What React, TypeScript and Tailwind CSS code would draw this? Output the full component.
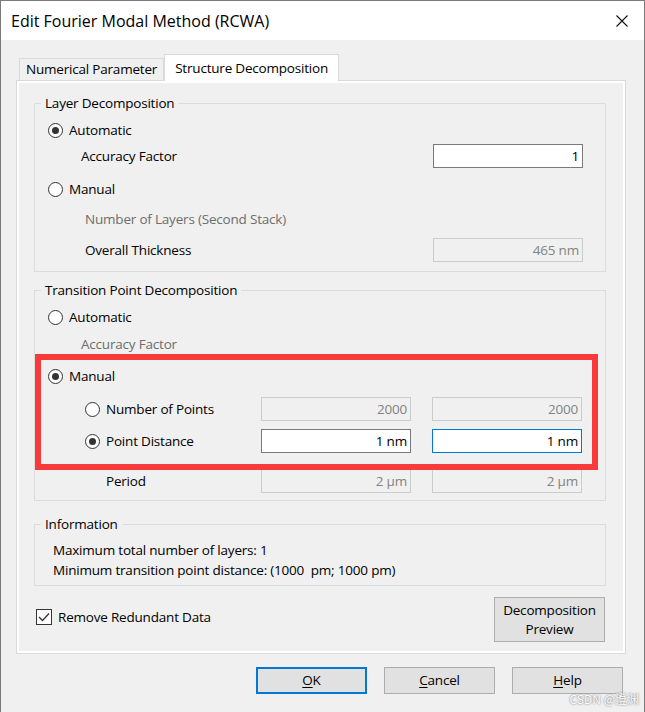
import React from 'react';

function Radio({ checked, label, disabled }: { checked?: boolean; label: string; disabled?: boolean }) {
  return (
    <div className="flex items-center gap-[6px]">
      <span className="w-[15px] h-[15px] rounded-full border border-[#333333] bg-white flex items-center justify-center shrink-0">
        {checked && <span className="w-[7px] h-[7px] rounded-full bg-[#333333]" />}
      </span>
      <span className={disabled ? 'text-[#6d6d6d]' : 'text-black'}>{label}</span>
    </div>
  );
}

function Field({ value, disabled, focused }: { value: string; disabled?: boolean; focused?: boolean }) {
  const look = disabled
    ? 'bg-[#f0f0f0] border-[#cccccc] text-[#838383]'
    : focused
      ? 'bg-white border-[#0078d7] text-black'
      : 'bg-white border-[#7a7a7a] text-black';
  return (
    <div className={`w-[150px] h-[24px] border ${look} flex items-center justify-end pr-[3px] shrink-0`}>
      {value}
    </div>
  );
}

function Group({ title, className, children }: { title: string; className?: string; children: React.ReactNode }) {
  return (
    <fieldset className={`border border-[#dcdcdc] ${className ?? ''}`}>
      <legend className="ml-[6px] px-[4px] leading-[20px] text-black">{title}</legend>
      {children}
    </fieldset>
  );
}

export default function App() {
  return (
    <div className="relative w-[645px] h-[712px] bg-[#f0f0f0] border-l border-r border-t border-[#7a7a7a] font-['Open_Sans',sans-serif] text-[13.5px] tracking-[-0.2px] text-black overflow-hidden">
      {/* Title bar */}
      <div className="h-[39px] bg-white flex items-center justify-between pl-[10px] pr-[16px]">
        <span className="text-[16px] tracking-normal text-black">Edit Fourier Modal Method (RCWA)</span>
        <svg width="12" height="12" viewBox="0 0 12 12" className="shrink-0">
          <path d="M0.5 0.5 L11.5 11.5 M11.5 0.5 L0.5 11.5" stroke="#111" strokeWidth="1.1" />
        </svg>
      </div>

      <div className="pl-[15px] pt-[14px]">
        {/* Tabs */}
        <div className="flex items-end h-[26px] pl-[3px]">
          <div className="h-[22px] px-[6px] flex items-center bg-[#f0f0f0] border border-b-0 border-[#dadada]">
            Numerical Parameter
          </div>
          <div className="relative z-10 h-[27px] -mb-px px-[10px] flex items-center bg-white border border-b-0 border-[#dadada]">
            Structure Decomposition
          </div>
        </div>

        {/* Tab page */}
        <div className="w-[610px] border border-[#dadada]">
          <div className="border-2 border-white pl-[15px] pr-[17px] pt-[10px] pb-[9px]">
            <Group title="Layer Decomposition" className="pb-[9px]">
              <div className="pl-[13px] mt-[5px] h-[24px] flex items-center">
                <Radio checked label="Automatic" />
              </div>
              <div className="mt-[2px] h-[24px] flex items-center justify-between pl-[46px] pr-[22px]">
                <span>Accuracy Factor</span>
                <Field value="1" />
              </div>
              <div className="pl-[13px] mt-[9px] h-[24px] flex items-center">
                <Radio label="Manual" />
              </div>
              <div className="mt-[6px] h-[24px] flex items-center pl-[50px] text-[#6d6d6d]">
                Number of Layers (Second Stack)
              </div>
              <div className="mt-[7px] h-[24px] flex items-center justify-between pl-[50px] pr-[22px]">
                <span>Overall Thickness</span>
                <Field value="465 nm" disabled />
              </div>
            </Group>

            <Group title="Transition Point Decomposition" className="mt-[8px] pb-[7px]">
              <div className="pl-[13px] mt-[5px] h-[24px] flex items-center">
                <Radio label="Automatic" />
              </div>
              <div className="mt-[3px] h-[24px] flex items-center pl-[46px] text-[#6d6d6d]">
                Accuracy Factor
              </div>
              <div className="pl-[13px] mt-[8px] h-[24px] flex items-center">
                <Radio checked label="Manual" />
              </div>
              <div className="mt-[9px] h-[24px] flex items-center pr-[22px]">
                <div className="w-[226px] pl-[50px]">
                  <Radio label="Number of Points" />
                </div>
                <Field value="2000" disabled />
                <div className="w-[21px]" />
                <Field value="2000" disabled />
              </div>
              <div className="mt-[8px] h-[24px] flex items-center pr-[22px]">
                <div className="w-[226px] pl-[50px]">
                  <Radio checked label="Point Distance" />
                </div>
                <Field value="1 nm" />
                <div className="w-[21px]" />
                <Field value="1 nm" focused />
              </div>
              <div className="mt-[16px] h-[24px] flex items-center pr-[22px]">
                <div className="w-[226px] pl-[71px]">Period</div>
                <Field value="2 µm" disabled />
                <div className="w-[21px]" />
                <Field value="2 µm" disabled />
              </div>
            </Group>

            <Group title="Information" className="mt-[13px] pb-[5px]">
              <div className="pt-[6px] pl-[18px]">
                <div className="leading-[20px]">Maximum total number of layers: 1</div>
                <div className="leading-[20px]">Minimum transition point distance: (1000&nbsp; pm; 1000 pm)</div>
              </div>
            </Group>

            <div className="mt-[11px] flex items-start justify-between pl-[2px] pr-[1px]">
              <div className="mt-[10px] flex items-center gap-[6px]">
                <span className="w-[16px] h-[16px] border border-[#333333] bg-white flex items-center justify-center">
                  <svg width="12" height="10" viewBox="0 0 12 10">
                    <path d="M1 5 L4.5 8.5 L11 1.5" fill="none" stroke="#333" strokeWidth="1.3" />
                  </svg>
                </span>
                <span>Remove Redundant Data</span>
              </div>
              <button className="w-[111px] h-[45px] bg-[#e1e1e1] border border-[#adadad] leading-[19px] text-center">
                Decomposition
                <br />
                Preview
              </button>
            </div>
          </div>
        </div>

        {/* Dialog buttons */}
        <div className="mt-[13px] flex justify-end gap-[17px] pr-[21px]">
          <button className="w-[111px] h-[27px] bg-[#e1e1e1] border-2 border-[#0078d7]">
            <span className="underline underline-offset-2">O</span>K
          </button>
          <button className="w-[111px] h-[27px] bg-[#e1e1e1] border border-[#adadad]">
            <span className="underline underline-offset-2">C</span>ancel
          </button>
          <button className="w-[111px] h-[27px] bg-[#e1e1e1] border border-[#adadad]">
            <span className="underline underline-offset-2">H</span>elp
          </button>
        </div>
      </div>

      {/* Annotation highlight */}
      <div className="absolute left-[34px] top-[353px] w-[563px] h-[116px] border-[6px] border-[#f93a3a] pointer-events-none" />

      {/* Watermark */}
      <div className="absolute right-[5px] bottom-[4px] text-[12px] tracking-normal text-white [text-shadow:0_0_2px_#555] font-['Noto_Sans_CJK_SC',sans-serif]">
        CSDN @澄渊
      </div>
    </div>
  );
}
